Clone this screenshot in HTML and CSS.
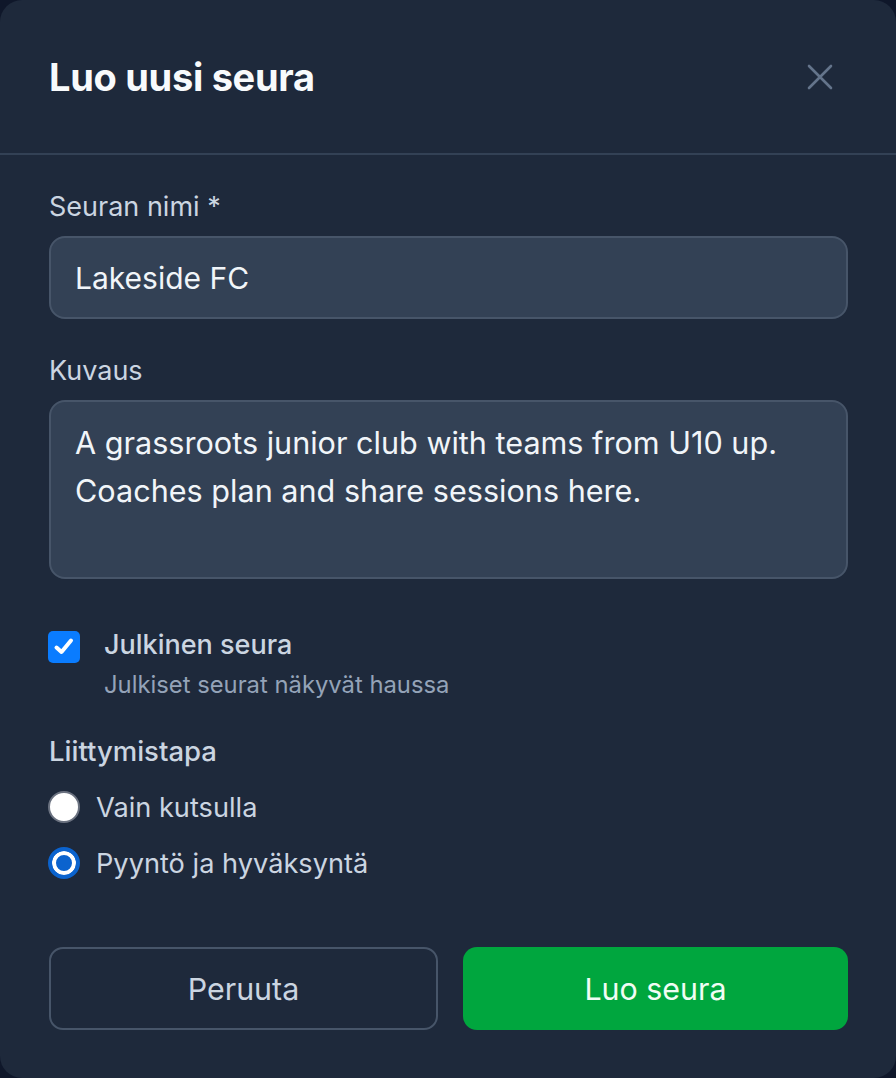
FILE: index.html
```html
<!DOCTYPE html>
<html lang="fi">
<head>
<meta charset="utf-8">
<title>Luo uusi seura</title>
<link rel="stylesheet" href="styles.css">
</head>
<body>
<div class="dialog">
  <header class="dialog-header">
    <h1 class="dialog-title">Luo uusi seura</h1>
    <button class="close-btn" aria-label="Sulje">
      <svg width="26" height="26" viewBox="0 0 26 26" fill="none" stroke="#64748b" stroke-width="2.6" stroke-linecap="round"><path d="M2 2 L24 24 M24 2 L2 24"/></svg>
    </button>
  </header>
  <div class="dialog-body">
    <label class="field-label">Seuran nimi *</label>
    <div class="input">Lakeside FC</div>

    <label class="field-label second">Kuvaus</label>
    <div class="textarea">A grassroots junior club with teams from U10 up.<br>Coaches plan and share sessions here.</div>

    <div class="check-row">
      <span class="checkbox">
        <svg width="24" height="24" viewBox="0 0 24 24" fill="none" stroke="#fff" stroke-width="4" stroke-linecap="round" stroke-linejoin="round"><path d="M4.5 12.5 L9.5 17 L19 5.5"/></svg>
      </span>
      <div class="check-text">
        <div class="check-title">Julkinen seura</div>
        <div class="check-help">Julkiset seurat näkyvät haussa</div>
      </div>
    </div>

    <div class="group-label">Liittymistapa</div>
    <div class="radio-row">
      <span class="radio"></span>
      <span class="radio-text">Vain kutsulla</span>
    </div>
    <div class="radio-row">
      <span class="radio checked"></span>
      <span class="radio-text">Pyyntö ja hyväksyntä</span>
    </div>

    <div class="actions">
      <button class="btn btn-cancel">Peruuta</button>
      <button class="btn btn-primary">Luo seura</button>
    </div>
  </div>
</div>
</body>
</html>
```
FILE: styles.css
```css
* { box-sizing: border-box; }
html, body {
  margin: 0;
  padding: 0;
  background: #0f172a;
}
body {
  font-family: Inter, "Noto Sans", sans-serif;
  width: 896px;
  height: 1078px;
}
.dialog {
  width: 896px;
  height: 1078px;
  background: #1e293b;
  border-radius: 22px;
  display: flex;
  flex-direction: column;
}
.dialog-header {
  height: 155px;
  border-bottom: 2px solid #334155;
  display: flex;
  align-items: center;
  justify-content: space-between;
  padding: 0 56px 0 49px;
}
.dialog-title {
  margin: 0;
  font-size: 38px;
  font-weight: 700;
  color: #f8fafc;
  letter-spacing: -0.3px;
}
.close-btn {
  background: none;
  border: 0;
  padding: 0;
  width: 40px;
  height: 40px;
  display: flex;
  align-items: center;
  justify-content: center;
}
.dialog-body {
  flex: 1;
  padding: 36px 48px 48px 49px;
  display: flex;
  flex-direction: column;
}
.field-label {
  display: block;
  font-size: 27px;
  line-height: 32px;
  color: #cbd5e1;
  margin-bottom: 13px;
}
.field-label.second { margin-top: 36px; }
.input {
  height: 83px;
  border: 2px solid #475569;
  background: #334155;
  border-radius: 16px;
  padding: 0 24px;
  display: flex;
  align-items: center;
  font-size: 30px;
  color: #f1f5f9;
}
.textarea {
  height: 179px;
  border: 2px solid #475569;
  background: #334155;
  border-radius: 16px;
  padding: 17px 24px;
  font-size: 30.6px;
  line-height: 48px;
  color: #f1f5f9;
}
.check-row {
  margin-top: 52px;
  display: flex;
  align-items: flex-start;
  gap: 24px;
}
.checkbox {
  width: 32px;
  height: 32px;
  border-radius: 5px;
  background: #0a7cff;
  display: flex;
  align-items: center;
  justify-content: center;
  flex: none;
  margin-left: -1px;
}
.check-text { display: flex; flex-direction: column; }
.check-title {
  font-size: 27px;
  line-height: 28px;
  font-weight: 500;
  color: #cbd5e1;
}
.check-help {
  margin-top: 12px;
  font-size: 23.8px;
  line-height: 28px;
  color: #94a3b8;
}
.group-label {
  margin-top: 36px;
  font-size: 27.5px;
  line-height: 32px;
  font-weight: 500;
  color: #cbd5e1;
}
.radio-row {
  display: flex;
  align-items: center;
  gap: 16px;
  height: 32px;
  margin-top: 24px;
}
.radio-row + .radio-row { margin-top: 24px; }
.radio {
  width: 32px;
  height: 32px;
  border-radius: 50%;
  background: #fff;
  border: 2px solid #6b7280;
  flex: none;
  margin-left: -1px;
}
.radio.checked {
  background: #0b63ce;
  border: 4px solid #0b63ce;
  box-shadow: inset 0 0 0 4px #fff;
}
.radio-text {
  font-size: 27.2px;
  color: #cbd5e1;
}
.actions {
  margin-top: auto;
  display: flex;
  gap: 25px;
}
.btn {
  flex: 1;
  height: 83px;
  border-radius: 14px;
  font-family: Inter, "Noto Sans", sans-serif;
  font-size: 30.4px;
  cursor: pointer;
}
.btn-cancel {
  background: transparent;
  border: 2px solid #475569;
  color: #cbd5e1;
}
.btn-primary {
  background: #00a63e;
  border: 0;
  color: #f0fdf4;
}
```
